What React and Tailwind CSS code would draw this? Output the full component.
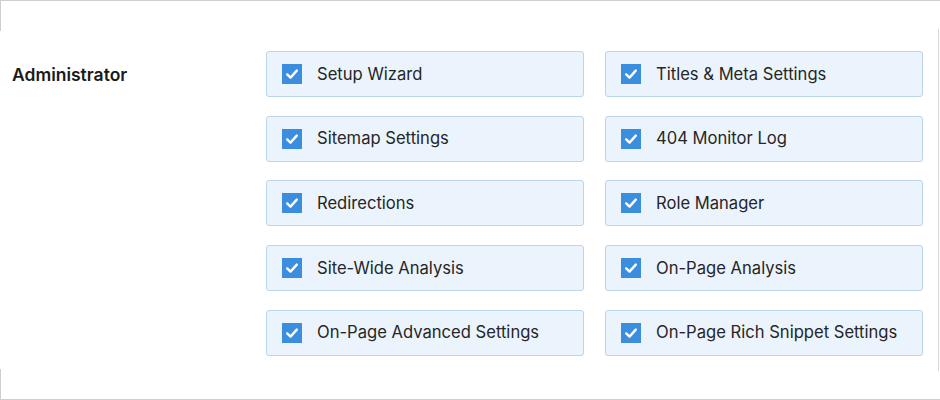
import React from 'react';

const items = [
  ['Setup Wizard', 'Titles & Meta Settings'],
  ['Sitemap Settings', '404 Monitor Log'],
  ['Redirections', 'Role Manager'],
  ['Site-Wide Analysis', 'On-Page Analysis'],
  ['On-Page Advanced Settings', 'On-Page Rich Snippet Settings'],
];

const CheckItem = ({ label }) => (
  <label className="flex items-center h-[46px] rounded-[3px] border border-[#bcd5e8] bg-[#ebf4fc] pl-[15px]">
    <span className="flex items-center justify-center w-[20px] h-[20px] bg-[#3b8ede] shrink-0">
      <svg width="14" height="14" viewBox="0 0 14 14" fill="none">
        <path d="M2.2 7.4 L5.5 10.6 L11.8 3.6" stroke="#fff" strokeWidth="2.4" strokeLinecap="round" strokeLinejoin="round" />
      </svg>
    </span>
    <span className="ml-[15px] text-[16.6px] text-[#262626]">{label}</span>
  </label>
);

export default function App() {
  return (
    <div
      className="relative w-[940px] h-[400px] bg-white border-t border-b border-[#cfcfcf]"
      style={{ fontFamily: 'Inter, "Open Sans", sans-serif' }}
    >
      {/* cropped frame edges */}
      <div className="absolute left-0 top-0 w-px h-[30px] bg-[#cfcfcf]" />
      <div className="absolute left-0 bottom-0 w-px h-[30px] bg-[#cfcfcf]" />
      <div className="absolute right-[1px] top-[28px] w-px h-[342px] bg-[#d8d8d8]" />

      <div className="flex pt-[50px]">
        <div className="w-[266px] pl-[12px] pt-[11px] text-[17.5px] font-semibold text-[#1a1a1a]">
          Administrator
        </div>
        <div className="grid grid-cols-2 gap-x-[21px] gap-y-[18.7px] w-[657px]">
          {items.map(([a, b]) => (
            <React.Fragment key={a}>
              <CheckItem label={a} />
              <CheckItem label={b} />
            </React.Fragment>
          ))}
        </div>
      </div>
    </div>
  );
}
